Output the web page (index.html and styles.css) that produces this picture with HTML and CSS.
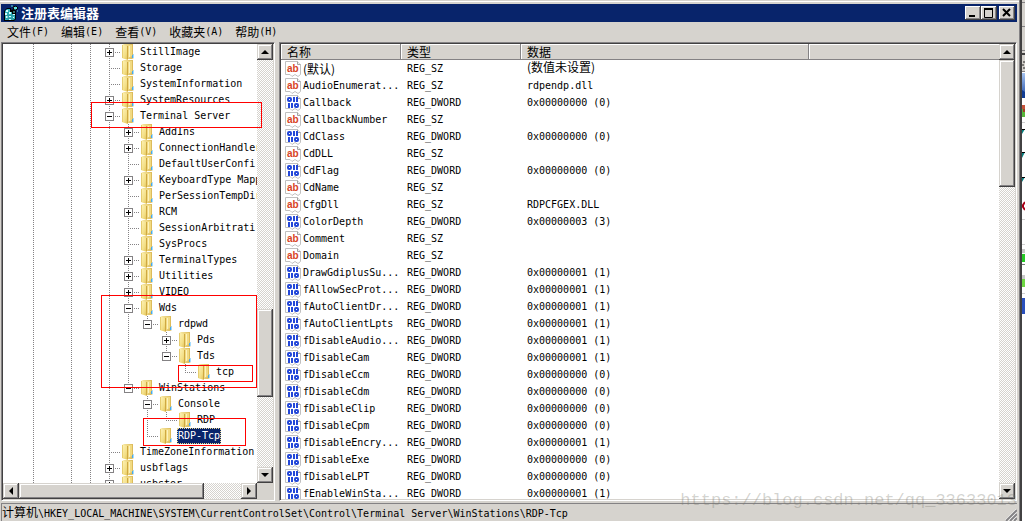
FILE: index.html
```html
<!DOCTYPE html>
<html lang="zh-CN">
<head>
<meta charset="utf-8">
<title>注册表编辑器</title>
<link rel="stylesheet" href="styles.css">
</head>
<body>
<svg class="defs" aria-hidden="true">
  <defs>
    <linearGradient id="leaf" x1="0" x2="1" y1="0" y2="1">
      <stop offset="0" stop-color="#fff3b8"/><stop offset=".6" stop-color="#f3df86"/><stop offset="1" stop-color="#dfbd52"/>
    </linearGradient>
    <linearGradient id="back" x1="0" x2="1" y1="0" y2="0">
      <stop offset="0" stop-color="#fbeeaa"/><stop offset="1" stop-color="#d8b450"/>
    </linearGradient>
    <linearGradient id="sky" x1="0" x2="0" y1="0" y2="1">
      <stop offset="0" stop-color="#a5c3f0"/><stop offset="1" stop-color="#2450a8"/>
    </linearGradient>
    <symbol id="folder" viewBox="0 0 16 16">
      <path d="M2 1L4 0H13V10L14 11V14L12 15H6L2 14Z" fill="url(#back)"/>
      <path d="M8 1H12V12L8 14Z" fill="#f1da82"/>
      <path d="M2 1L8 2V16L2 14Z" fill="url(#leaf)"/>
      <path d="M7.500 2V15" stroke="#cfa842"/>
      <path d="M9.500 2V13" stroke="#fdf2bd"/>
      <path d="M2.500 1V14" stroke="#e6cd70"/>
      <rect x="12" y="11" width="1" height="3" fill="#4aa8e8"/><rect x="13" y="10" width="1" height="4" fill="#a5dcff"/>
    </symbol>
    <symbol id="page" viewBox="0 0 16 16">
      <path d="M.5.500H12.500L15.500 3.500V13.500L13 15.500L10 13.500L7 15.500L5 13.500H.5Z" fill="#fff" stroke="#c0c0c0"/>
      <path d="M12.500.500V3.500H15.500" fill="#eee" stroke="#a4a4a4"/>
    </symbol>
    <symbol id="sz" viewBox="0 0 16 16">
      <use href="#page"/>
      <text class="ab" x="2" y="11">ab</text>
    </symbol>
    <symbol id="dw" viewBox="0 0 16 16">
      <use href="#page"/>
      <g fill="none" stroke="#2347d8" stroke-width="2">
        <rect x="3" y="3" width="3" height="3" rx="1"/><path d="M9 2V7M12 2V7M4 8V13M7 8V13"/><rect x="10" y="9" width="3" height="3" rx="1"/>
      </g>
    </symbol>
    <symbol id="up" viewBox="0 0 8 8"><path d="M0 6L4 2L8 6Z"/></symbol>
    <symbol id="down" viewBox="0 0 8 8"><path d="M0 2H8L4 6Z"/></symbol>
    <symbol id="left" viewBox="0 0 8 8"><path d="M6 0V8L2 4Z"/></symbol>
    <symbol id="right" viewBox="0 0 8 8"><path d="M2 0L6 4L2 8Z"/></symbol>
  </defs>
</svg>

<div class="window">
  <header class="titlebar">
    <svg class="app-icon" viewBox="0 0 16 16" aria-hidden="true">
      <path d="M1 6L4 3H8V5L11 4L13 6V14L11 16H1Z" fill="#000"/>
      <path d="M2 6L4 4H7V7H9V9H12V14L10 15H2Z" fill="#31b5bd"/>
      <path d="M3 6H5M2 9H4M3 12H5M6 8H8M6 11H8M6 14H8M10 10H12M10 13H11" stroke="#d6ffff" stroke-width="2"/>
      <path d="M5 7V15M9 9V15M2 10.500H12M2 13.500H11" stroke="#2a9aa4"/>
      <path d="M10 2L13 1L15 3L13 5L11 5Z" fill="#5ee0de" stroke="#000"/>
      <path d="M8 1H10M14 6H15M10 7H12" stroke="#5ee0de"/>
    </svg>
    <h1>注册表编辑器</h1>
    <div class="controls">
      <button class="bevel" aria-label="最小化"><svg viewBox="0 0 12 10"><path d="M2 8H8" stroke="#000" stroke-width="2"/></svg></button>
      <button class="bevel" aria-label="最大化"><svg viewBox="0 0 12 10"><path d="M1.500 1V9.500H9.500V1M1 1H10" fill="none" stroke="#000"/><path d="M1 1H10" stroke="#000" stroke-width="2"/></svg></button>
      <button class="bevel close" aria-label="关闭"><svg viewBox="0 0 12 10"><path d="M2 1L9 8M9 1L2 8" stroke="#000" stroke-width="2"/></svg></button>
    </div>
  </header>

  <nav class="menu">
    <button><span class="cjk">文件</span>(F)</button>
    <button><span class="cjk">编辑</span>(E)</button>
    <button><span class="cjk">查看</span>(V)</button>
    <button><span class="cjk">收藏夹</span>(A)</button>
    <button><span class="cjk">帮助</span>(H)</button>
  </nav>

  <main class="panes">
    <section class="pane tree-pane">
      <div class="tree">
        <ul class="root">
          <li><div class="row"><button class="box plus" aria-label="展开"></button><svg><use href="#folder"/></svg><span>StillImage</span></div></li>
          <li><div class="row"><svg><use href="#folder"/></svg><span>Storage</span></div></li>
          <li><div class="row"><svg><use href="#folder"/></svg><span>SystemInformation</span></div></li>
          <li><div class="row"><button class="box plus" aria-label="展开"></button><svg><use href="#folder"/></svg><span>SystemResources</span></div></li>
          <li><div class="row"><button class="box" aria-label="折叠"></button><svg><use href="#folder"/></svg><span>Terminal Server</span></div>
            <ul>
              <li><div class="row"><button class="box plus" aria-label="展开"></button><svg><use href="#folder"/></svg><span>AddIns</span></div></li>
              <li><div class="row"><button class="box plus" aria-label="展开"></button><svg><use href="#folder"/></svg><span>ConnectionHandler</span></div></li>
              <li><div class="row"><svg><use href="#folder"/></svg><span>DefaultUserConfi</span></div></li>
              <li><div class="row"><button class="box plus" aria-label="展开"></button><svg><use href="#folder"/></svg><span>KeyboardType Mapp</span></div></li>
              <li><div class="row"><svg><use href="#folder"/></svg><span>PerSessionTempDir</span></div></li>
              <li><div class="row"><button class="box plus" aria-label="展开"></button><svg><use href="#folder"/></svg><span>RCM</span></div></li>
              <li><div class="row"><svg><use href="#folder"/></svg><span>SessionArbitrati</span></div></li>
              <li><div class="row"><svg><use href="#folder"/></svg><span>SysProcs</span></div></li>
              <li><div class="row"><button class="box plus" aria-label="展开"></button><svg><use href="#folder"/></svg><span>TerminalTypes</span></div></li>
              <li><div class="row"><button class="box plus" aria-label="展开"></button><svg><use href="#folder"/></svg><span>Utilities</span></div></li>
              <li><div class="row"><button class="box plus" aria-label="展开"></button><svg><use href="#folder"/></svg><span>VIDEO</span></div></li>
              <li><div class="row"><button class="box" aria-label="折叠"></button><svg><use href="#folder"/></svg><span>Wds</span></div>
                <ul>
                  <li><div class="row"><button class="box" aria-label="折叠"></button><svg><use href="#folder"/></svg><span>rdpwd</span></div>
                    <ul>
                      <li><div class="row"><button class="box plus" aria-label="展开"></button><svg><use href="#folder"/></svg><span>Pds</span></div></li>
                      <li><div class="row"><button class="box" aria-label="折叠"></button><svg><use href="#folder"/></svg><span>Tds</span></div>
                        <ul>
                          <li><div class="row"><svg><use href="#folder"/></svg><span>tcp</span></div></li>
                        </ul>
                      </li>
                    </ul>
                  </li>
                </ul>
              </li>
              <li><div class="row"><button class="box" aria-label="折叠"></button><svg><use href="#folder"/></svg><span>WinStations</span></div>
                <ul>
                  <li><div class="row"><button class="box" aria-label="折叠"></button><svg><use href="#folder"/></svg><span>Console</span></div>
                    <ul>
                      <li><div class="row"><svg><use href="#folder"/></svg><span>RDP</span></div></li>
                    </ul>
                  </li>
                  <li><div class="row"><svg><use href="#folder"/></svg><span class="selected">RDP-Tcp</span></div></li>
                </ul>
              </li>
            </ul>
          </li>
          <li><div class="row"><svg><use href="#folder"/></svg><span>TimeZoneInformation</span></div></li>
          <li><div class="row"><button class="box plus" aria-label="展开"></button><svg><use href="#folder"/></svg><span>usbflags</span></div></li>
          <li class="more"><div class="row"><button class="box plus" aria-label="展开"></button><svg><use href="#folder"/></svg><span>usbstor</span></div></li>
        </ul>
      </div>
      <div class="scroll vertical tree-v">
        <button class="bevel" aria-label="向上"><svg><use href="#up"/></svg></button>
        <i class="before"></i><i class="bevel thumb"></i><i class="after"></i>
        <button class="bevel" aria-label="向下"><svg><use href="#down"/></svg></button>
      </div>
      <div class="scroll horizontal">
        <button class="bevel" aria-label="向左"><svg><use href="#left"/></svg></button>
        <i class="bevel thumb"></i><i class="after"></i>
        <button class="bevel" aria-label="向右"><svg><use href="#right"/></svg></button>
      </div>
    </section>

    <section class="pane list-pane">
      <div class="list">
        <table>
          <colgroup><col class="c-name"><col class="c-type"><col class="c-data"><col></colgroup>
          <thead><tr><th>名称</th><th>类型</th><th>数据</th><th></th></tr></thead>
          <tbody>
            <tr><td><svg><use href="#sz"/></svg><span class="cjk">(默认)</span></td><td>REG_SZ</td><td><span class="cjk">(数值未设置)</span></td><td></td></tr>
            <tr><td><svg><use href="#sz"/></svg>AudioEnumerat...</td><td>REG_SZ</td><td>rdpendp.dll</td><td></td></tr>
            <tr><td><svg><use href="#dw"/></svg>Callback</td><td>REG_DWORD</td><td>0x00000000 (0)</td><td></td></tr>
            <tr><td><svg><use href="#sz"/></svg>CallbackNumber</td><td>REG_SZ</td><td></td><td></td></tr>
            <tr><td><svg><use href="#dw"/></svg>CdClass</td><td>REG_DWORD</td><td>0x00000000 (0)</td><td></td></tr>
            <tr><td><svg><use href="#sz"/></svg>CdDLL</td><td>REG_SZ</td><td></td><td></td></tr>
            <tr><td><svg><use href="#dw"/></svg>CdFlag</td><td>REG_DWORD</td><td>0x00000000 (0)</td><td></td></tr>
            <tr><td><svg><use href="#sz"/></svg>CdName</td><td>REG_SZ</td><td></td><td></td></tr>
            <tr><td><svg><use href="#sz"/></svg>CfgDll</td><td>REG_SZ</td><td>RDPCFGEX.DLL</td><td></td></tr>
            <tr><td><svg><use href="#dw"/></svg>ColorDepth</td><td>REG_DWORD</td><td>0x00000003 (3)</td><td></td></tr>
            <tr><td><svg><use href="#sz"/></svg>Comment</td><td>REG_SZ</td><td></td><td></td></tr>
            <tr><td><svg><use href="#sz"/></svg>Domain</td><td>REG_SZ</td><td></td><td></td></tr>
            <tr><td><svg><use href="#dw"/></svg>DrawGdiplusSu...</td><td>REG_DWORD</td><td>0x00000001 (1)</td><td></td></tr>
            <tr><td><svg><use href="#dw"/></svg>fAllowSecProt...</td><td>REG_DWORD</td><td>0x00000001 (1)</td><td></td></tr>
            <tr><td><svg><use href="#dw"/></svg>fAutoClientDr...</td><td>REG_DWORD</td><td>0x00000001 (1)</td><td></td></tr>
            <tr><td><svg><use href="#dw"/></svg>fAutoClientLpts</td><td>REG_DWORD</td><td>0x00000001 (1)</td><td></td></tr>
            <tr><td><svg><use href="#dw"/></svg>fDisableAudio...</td><td>REG_DWORD</td><td>0x00000001 (1)</td><td></td></tr>
            <tr><td><svg><use href="#dw"/></svg>fDisableCam</td><td>REG_DWORD</td><td>0x00000001 (1)</td><td></td></tr>
            <tr><td><svg><use href="#dw"/></svg>fDisableCcm</td><td>REG_DWORD</td><td>0x00000000 (0)</td><td></td></tr>
            <tr><td><svg><use href="#dw"/></svg>fDisableCdm</td><td>REG_DWORD</td><td>0x00000000 (0)</td><td></td></tr>
            <tr><td><svg><use href="#dw"/></svg>fDisableClip</td><td>REG_DWORD</td><td>0x00000000 (0)</td><td></td></tr>
            <tr><td><svg><use href="#dw"/></svg>fDisableCpm</td><td>REG_DWORD</td><td>0x00000000 (0)</td><td></td></tr>
            <tr><td><svg><use href="#dw"/></svg>fDisableEncry...</td><td>REG_DWORD</td><td>0x00000001 (1)</td><td></td></tr>
            <tr><td><svg><use href="#dw"/></svg>fDisableExe</td><td>REG_DWORD</td><td>0x00000000 (0)</td><td></td></tr>
            <tr><td><svg><use href="#dw"/></svg>fDisableLPT</td><td>REG_DWORD</td><td>0x00000000 (0)</td><td></td></tr>
            <tr><td><svg><use href="#dw"/></svg>fEnableWinSta...</td><td>REG_DWORD</td><td>0x00000001 (1)</td><td></td></tr>
          </tbody>
        </table>
      </div>
      <div class="scroll vertical list-v">
        <button class="bevel" aria-label="向上"><svg><use href="#up"/></svg></button>
        <i class="bevel thumb"></i><i class="after"></i>
        <button class="bevel" aria-label="向下"><svg><use href="#down"/></svg></button>
      </div>
    </section>
  </main>

  <footer class="status">
    <span><span class="cjk">计算机</span>\HKEY_LOCAL_MACHINE\SYSTEM\CurrentControlSet\Control\Terminal Server\WinStations\RDP-Tcp</span>
    <svg class="grip" viewBox="0 0 12 12"><path d="M1 12L12 1M5 12L12 5M9 12L12 9" stroke="#fff" stroke-width="3"/><path d="M1 12L12 1M5 12L12 5M9 12L12 9" stroke="#848284" stroke-width="2"/></svg>
  </footer>
</div>

<svg class="behind" viewBox="0 0 3 521" preserveAspectRatio="xMinYMin slice" aria-hidden="true">
  <rect width="3" height="521" fill="#fff"/>
  <rect width="3" height="72" fill="#d6d3ce"/>
  <path d="M0 2.500H3M0 26.500H3M0 50.500H3M0 71.500H3" stroke="#848284"/>
  <path d="M0 54H3" stroke="#424142" stroke-width="2"/>
  <path d="M1 62H3M0 65H2M1 68H3" stroke="#222"/>
  <rect y="73" width="3" height="24" fill="url(#sky)"/>
  <path d="M0 90L3 92V98H0Z" fill="#123d94"/>
  <rect y="105" width="3" height="4" fill="#c4523a"/><rect y="109" width="3" height="8" fill="#58b83c"/><rect x="1" y="109" width="2" height="3" fill="#a0402a"/>
  <path d="M0 122.500H3M0 219.500H3M0 244.500H3M0 293.500H3" stroke="#d0d0d0"/>
  <path d="M0 129H3L0 134ZM0 152H3L0 158ZM0 177H3L0 182Z" fill="#088080"/>
  <path d="M0 129.500H3M0 152.500H3M0 177.500H3" stroke="#000"/>
  <path d="M3 202L1 205V207L3 210" fill="none" stroke="#a80018" stroke-width="2"/>
  <rect y="249" width="3" height="4" fill="#c8c8c8"/><rect y="254" width="3" height="8" fill="#26c926"/>
  <path d="M0 264.500H3" stroke="#777"/>
  <rect y="275" width="3" height="4" fill="#c8c8c8"/><rect y="279" width="3" height="8" fill="#6fd843"/>
  <rect y="298" width="3" height="16" fill="#2a50bd"/>
</svg>

<i class="mark mark-server"></i>
<i class="mark mark-wds"></i>
<i class="mark mark-tcp"></i>
<i class="mark mark-rdp"></i>
<div class="watermark">https://blog.csdn.net/qq_33633013</div>
</body>
</html>
```
FILE: styles.css
```css
:root {
  --face: #d6d3ce;
  --shadow: #848284;
  --dark: #424142;
  --navy: #08246b;
  --dots: #848284;
}
* { box-sizing: border-box; }
body {
  margin: 0;
  height: 100vh;
  display: flex;
  overflow: hidden;
  position: relative;
  background: #fff;
  color: #000;
  font: 10px/16px "DejaVu Sans Mono", "Noto Sans CJK SC", monospace;
}
button { margin: 0; padding: 0; border: 0; background: none; color: inherit; font: inherit; }
svg { display: block; flex: none; }
.defs { position: absolute; width: 0; height: 0; }
.cjk { font: 12px/16px "Noto Sans CJK SC", sans-serif; }

.window {
  flex: 1;
  min-width: 0;
  display: flex;
  flex-direction: column;
  background: var(--face);
  border-right: 2px solid var(--dark);
  box-shadow: inset -1px 0 var(--shadow), inset 0 1px var(--face), inset 0 2px #fff;
  padding: 4px 3px 0 1px;
}
.behind { width: 3px; height: 521px; }

.titlebar {
  display: flex;
  align-items: center;
  height: 18px;
  background: var(--navy);
  color: #fff;
  padding: 0 2px;
}
.app-icon { width: 16px; height: 16px; }
h1 { margin: 0 0 0 2px; flex: 1; font: bold 13px/18px "Noto Sans CJK SC", sans-serif; }
.controls { display: flex; }
.controls .bevel { width: 16px; height: 14px; }
.controls svg { width: 12px; height: 10px; }
.controls .close { margin-left: 2px; }

.bevel {
  display: flex;
  align-items: center;
  justify-content: center;
  flex: none;
  background: var(--face);
  box-shadow: inset -1px -1px var(--dark), inset 1px 1px var(--face), inset -2px -2px var(--shadow), inset 2px 2px #fff;
}
.controls .bevel { box-shadow: inset -1px -1px var(--dark), inset 1px 1px #fff, inset -2px -2px var(--shadow); }

.menu { display: flex; height: 20px; align-items: center; }
.menu button { padding: 0 6px; display: flex; white-space: nowrap; }

.panes { flex: 1; min-height: 0; display: flex; gap: 4px; }
.pane {
  display: grid;
  min-width: 0;
  min-height: 0;
  background: #fff;
  border: 1px solid;
  border-color: var(--shadow) #fff #fff var(--shadow);
  box-shadow: inset 1px 1px var(--dark), inset -1px -1px var(--face);
  padding: 1px;
}
.tree-pane { flex: 0 0 274px; grid-template: minmax(0, 1fr) 16px / minmax(0, 1fr) 16px; background: var(--face); }
.list-pane { flex: 1; grid-template: minmax(0, 1fr) / minmax(0, 1fr) 16px; }

.tree {
  overflow: hidden;
  background:
    repeating-linear-gradient(var(--dots) 0 1px, #fff 1px 2px) 30px 0 / 1px 100% no-repeat,
    repeating-linear-gradient(var(--dots) 0 1px, #fff 1px 2px) 68px 0 / 1px 100% no-repeat,
    repeating-linear-gradient(var(--dots) 0 1px, #fff 1px 2px) 87px 0 / 1px 100% no-repeat,
    #fff;
}
.tree ul { margin: 0; padding: 0 0 0 19px; list-style: none; }
.tree .root { padding-left: 97px; }
.tree li { background: repeating-linear-gradient(var(--dots) 0 1px, #fff 1px 2px) 9px 0 / 1px 100% no-repeat; }
.tree li:last-child:not(.more) { background-size: 1px 8px; }
.row {
  display: flex;
  align-items: center;
  height: 16px;
  padding-left: 5px;
  white-space: nowrap;
  background: repeating-linear-gradient(90deg, var(--dots) 0 1px, #fff 1px 2px) 9px 8px / 11px 1px no-repeat;
}
.row svg { width: 16px; height: 16px; margin-left: 15px; }
.row .box + svg { margin-left: 6px; }
.row span { flex: none; border: 1px solid transparent; margin-left: 3px; line-height: 14px; }
.row .selected { background: var(--navy); color: #fff; border: 1px dotted #e8d890; }
.box {
  flex: none;
  width: 9px;
  height: 9px;
  border: 1px solid var(--shadow);
  background: linear-gradient(#000, #000) center / 5px 1px no-repeat, #fff;
}
.plus { background: linear-gradient(#000, #000) center / 5px 1px no-repeat, linear-gradient(#000, #000) center / 1px 5px no-repeat, #fff; }

.scroll { display: flex; background: repeating-conic-gradient(#fff 0 25%, var(--face) 0 50%) 0 0 / 2px 2px; }
.scroll button { width: 16px; height: 16px; }
.scroll svg { width: 8px; height: 8px; }
.vertical { flex-direction: column; }
.horizontal .thumb { flex: 185; }
.horizontal .after { flex: 37; }
.tree-v .before { flex: 249; }
.tree-v .thumb { flex: 88; }
.tree-v .after { flex: 70; }
.list-v .thumb { flex: 127; }
.list-v .after { flex: 296; }

.list { overflow: hidden; }
table { width: 100%; table-layout: fixed; border-collapse: separate; border-spacing: 0; }
.c-name, .c-type { width: 120px; }
.c-data { width: 288px; }
th {
  height: 16px;
  padding: 0 6px;
  text-align: left;
  font: 12px/14px "Noto Sans CJK SC", sans-serif;
  background: var(--face);
  border-bottom: 1px solid var(--shadow);
  border-right: 1px solid var(--shadow);
  box-shadow: inset 1px 1px #fff;
}
th:last-child { border-right: 0; }
td { height: 17px; padding: 0 6px; white-space: nowrap; overflow: hidden; line-height: 16px; }
td:first-child { display: flex; align-items: center; gap: 2px; padding: 0 0 0 4px; }
td .cjk { line-height: 14px; }
td svg { width: 16px; height: 16px; }
.ab { font: bold 10px "Liberation Sans", sans-serif; fill: #d8431f; }

.status {
  display: flex;
  align-items: center;
  justify-content: space-between;
  height: 18px;
  margin-top: 2px;
  border-top: 1px solid var(--shadow);
  border-left: 1px solid var(--shadow);
  white-space: nowrap;
}
.status > span { flex: 1; overflow: hidden; }
.grip { width: 12px; height: 12px; align-self: flex-end; }

.mark { position: absolute; border: 1px solid #f00; pointer-events: none; }
.mark-server { left: 91px; top: 102px; width: 171px; height: 26px; }
.mark-wds { left: 101px; top: 295px; width: 156px; height: 93px; }
.mark-tcp { left: 178px; top: 365px; width: 75px; height: 17px; }
.mark-rdp { left: 143px; top: 418px; width: 103px; height: 28px; }
.watermark {
  position: absolute;
  right: 8px;
  bottom: 10px;
  font: 17px/20px "Liberation Mono", monospace;
  color: rgba(120, 120, 110, .32);
  pointer-events: none;
}
```
